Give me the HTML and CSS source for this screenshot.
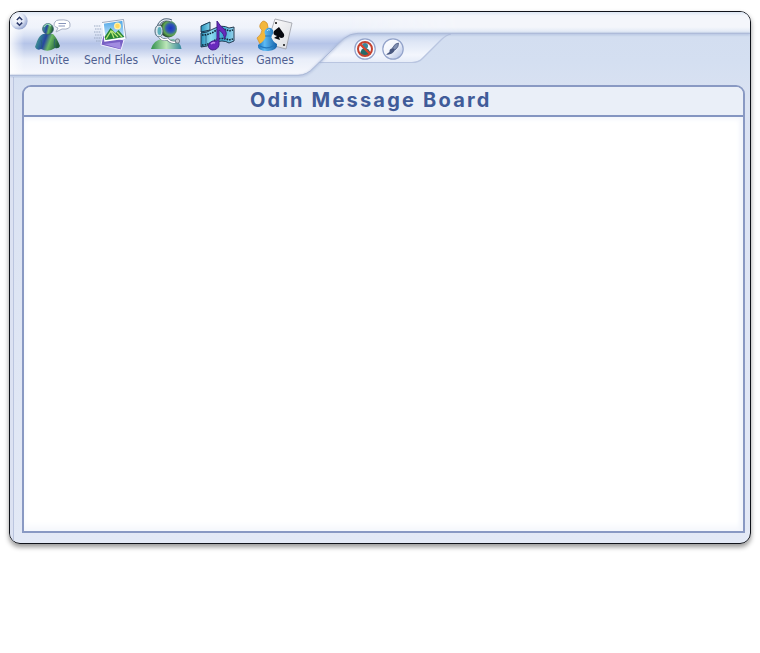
FILE: index.html
```html
<!DOCTYPE html>
<html lang="en">
<head>
<meta charset="utf-8">
<title>Odin Message Board</title>
<link rel="stylesheet" href="styles.css">
</head>
<body>
<main class="window">
  <header class="header">
    <svg class="chrome" viewBox="10 12 740 66" aria-hidden="true">
      <defs>
        <linearGradient id="bar" gradientUnits="userSpaceOnUse" x1="0" y1="12" x2="0" y2="75">
          <stop offset="0" stop-color="#dfe8f5"/><stop offset=".08" stop-color="#f4f6fc"/>
          <stop offset=".25" stop-color="#eff3fb"/><stop offset=".37" stop-color="#d8e1f4"/>
          <stop offset=".5" stop-color="#b5c4e8"/><stop offset=".58" stop-color="#c1ceeb"/>
          <stop offset=".75" stop-color="#e9eef9"/><stop offset="1" stop-color="#f7f8fd"/>
        </linearGradient>
        <linearGradient id="strip" x1="0" y1="0" x2="0" y2="1">
          <stop offset="0" stop-color="#dde7f4"/><stop offset=".18" stop-color="#f4f6fb"/>
          <stop offset=".72" stop-color="#f4f6fb"/><stop offset="1" stop-color="#dde6f4"/>
        </linearGradient>
        <linearGradient id="fade" gradientUnits="userSpaceOnUse" x1="345" y1="0" x2="460" y2="0">
          <stop offset="0" stop-color="#000"/><stop offset="1" stop-color="#fff"/>
        </linearGradient>
        <mask id="reveal" maskUnits="userSpaceOnUse" x="340" y="12" width="410" height="30"><rect x="340" y="12" width="410" height="30" fill="url(#fade)"/></mask>
        <linearGradient id="tab" x1="0" y1="0" x2="0" y2="1">
          <stop offset="0" stop-color="#cbd7ee"/><stop offset=".3" stop-color="#dfe7f6"/>
          <stop offset=".75" stop-color="#f3f6fd"/><stop offset="1" stop-color="#e6ecf8"/>
        </linearGradient>
        <linearGradient id="edge" x1="0" y1="0" x2="1" y2="0">
          <stop offset="0" stop-color="#fff" stop-opacity=".85"/><stop offset="1" stop-color="#fff" stop-opacity="0"/>
        </linearGradient>
        <filter id="soft"><feGaussianBlur stdDeviation=".8"/></filter>
      </defs>
      <path d="M322 62H412Q418 62 422 58L440 40Q445 34 450 34H340Z" fill="url(#tab)"/>
      <path d="M318 62.500H412Q419 62.500 423 58L441 40Q446 35 451 34" fill="none" stroke="#b9c5e0" stroke-width="1.2"/>
      <path d="M10 12H750V33H358Q350 33 344 38L314 67Q307 75 298 75H10Z" fill="url(#bar)"/>
      <path d="M340 12H750V33H340Z" fill="url(#strip)" mask="url(#reveal)"/>
      <rect x="10" y="12" width="14" height="63" fill="url(#edge)"/>
      <path d="M750 34H358Q350 34 344 39L314 68Q307 76 298 76H10" fill="none" stroke="#8498c5" stroke-width="2" opacity=".4" filter="url(#soft)"/>
      <path d="M750 33.300H358Q350 33.500 344 38.500L314 67.500Q307 75.300 298 75.300H10" fill="none" stroke="#a9b7d6" stroke-width="1"/>
    </svg>
    <button class="round toggle" aria-label="Toggle toolbar">
      <svg viewBox="0 0 18 18"><defs><radialGradient id="knob" cx=".35" cy=".35" r=".7"><stop stop-color="#fff"/><stop offset=".6" stop-color="#dfe6f5"/><stop offset="1" stop-color="#8fa0cc"/></radialGradient></defs>
        <circle cx="9" cy="9" r="8.600" fill="url(#knob)"/><path d="M6.800 8 9.500 5.300l2.700 2.700M6.800 10.600 9.500 13.300l2.700-2.700" fill="none" stroke="#2a3869" stroke-width="1.500"/></svg>
    </button>
    <nav class="tools">
      <a class="tool invite">
        <svg viewBox="30 14 50 40">
          <defs><linearGradient id="person" x1="0" y1="0" x2="1" y2=".25"><stop stop-color="#74a99b"/><stop offset=".25" stop-color="#347e94"/><stop offset=".46" stop-color="#2745a1"/><stop offset=".67" stop-color="#6bb862"/><stop offset="1" stop-color="#205b3c"/></linearGradient></defs>
          <path d="M44 33C39 35 38 41 36 46Q38 50 42 48Q49 52 56 47Q60 48 61 45C59 40 57 36 54 33Z" fill="url(#person)"/>
          <path d="M42 39Q44 43 42 48M56 38Q54 44 57 47" fill="none" stroke="#275e79" stroke-width=".8"/>
          <circle cx="49" cy="28" r="5.400" fill="url(#person)" stroke="#365b70" stroke-width=".8"/>
          <path d="M45 26Q48 21 52 25" fill="none" stroke="#9be1b5" stroke-width="1.200"/>
          <path d="M60 19Q71 18 71 23Q72 29 63 28L57 31L59 27Q53 25 56 21Q57 19 60 19Z" fill="#fff" stroke="#a6afc4" stroke-width="1"/>
          <path d="M59.500 22.500H67M59.500 25H66" stroke="#8895ba" stroke-width="1"/>
        </svg><span>Invite</span></a>
      <a class="tool files">
        <svg viewBox="86 14 50 40">
          <defs><linearGradient id="sky" x1="0" y1="0" x2="0" y2="1"><stop stop-color="#4aa4e6"/><stop offset="1" stop-color="#e0f3ff"/></linearGradient></defs>
          <path d="M94 25h7M95 28h7M94 31h7M95 34h7M94 37h8M96 40h6" stroke="#9caac4" stroke-width="1.100" stroke-dasharray="1.500 .8"/>
          <path d="m103 34 21 5-3 10-20-5Z" fill="#775fc4" stroke="#f2f1ff" stroke-width="1"/>
          <path d="m104 43 16-2 1 7Z" fill="#a18be0"/>
          <path d="m103 22 20-3 2 18-20 3Z" fill="url(#sky)" stroke="#fff" stroke-width="1.500"/>
          <circle cx="117.500" cy="25" r="3.500" fill="#fff3a6"/><circle cx="117.500" cy="25" r="2.300" fill="#ffd961"/>
          <path d="m104.500 36 6-9 5 5 3-3 6 7-19 3Z" fill="#278536"/>
          <path d="m106 38 5-8 3 7m-2-7 6 6M117 31l5 5" fill="none" stroke="#b9e577" stroke-width="1.300"/>
          <path d="M102 21.500 123.500 18.500l2.500 19" fill="none" stroke="#72829e" stroke-width=".7"/>
        </svg><span>Send Files</span></a>
      <a class="tool voice">
        <svg viewBox="142.500 14 50 40">
          <defs><radialGradient id="face" cx=".62" cy=".45" r=".6"><stop stop-color="#1b30c8"/><stop offset=".4" stop-color="#3159b2"/><stop offset=".7" stop-color="#60a84e"/><stop offset="1" stop-color="#17342c"/></radialGradient><linearGradient id="body"><stop stop-color="#2f8f4b"/><stop offset=".5" stop-color="#bce6b8"/><stop offset="1" stop-color="#3787a0"/></linearGradient></defs>
          <path d="M151.500 48Q154 39 163 38L174 38Q181 41 182 48Z" fill="url(#body)"/>
          <circle cx="169" cy="28" r="8.500" fill="url(#face)"/>
          <path d="M158 29C159 20 165 17 172 20" fill="none" stroke="#51657a" stroke-width="3"/><path d="M158 29C159 20 165 17 172 20" fill="none" stroke="#e8f0f6" stroke-width="1.300"/>
          <ellipse cx="159.500" cy="30" rx="4" ry="6" fill="#d9e6ec" stroke="#4d6576"/>
          <ellipse cx="160" cy="30" rx="2" ry="4" fill="#5cafbc"/>
          <path d="M160 36Q163 40 168 38Q171 42 176 41" fill="none" stroke="#5e7080" stroke-width="2.600"/><path d="M160 36Q163 40 168 38Q171 42 176 41" fill="none" stroke="#fff" stroke-width="1.400"/>
          <circle cx="178" cy="40" r="2.200" fill="#bbc5ce" stroke="#596370" stroke-width=".7"/>
        </svg><span>Voice</span></a>
      <a class="tool activities">
        <svg viewBox="196 14 50 40">
          <defs><linearGradient id="film"><stop stop-color="#2591ba"/><stop offset=".3" stop-color="#8fdcf2"/><stop offset=".65" stop-color="#3ca7d0"/><stop offset="1" stop-color="#95d2ed"/></linearGradient></defs>
          <path d="M203 25Q207 22 212 21V34L216 31Q222 29 231 33L236 31V40L231 42Q224 38 216 42L203 46Z" fill="url(#film)"/>
          <path d="M203 25 212 21V29L203 31ZM203 32V46Q209 46 215 42Q225 38 231 42L236 40V26L231 27Q224 23 215 28Q209 32 203 32Z" fill="url(#film)" stroke="#172b42" stroke-width=".9"/>
          <path d="M204 34Q211 34 217 30Q224 26 231 30l4-1M204 44Q211 44 217 39Q224 36 231 39l4-1" fill="none" stroke="#102739" stroke-width="1.600" stroke-dasharray="1.600 1"/>
          <path d="M208 34v10M227 28v10" stroke="#164569" stroke-width=".6"/>
          <path d="M219 20Q222 25 227 29Q230 33 226 38Q227 33 221 29V44Q220 49 214 49Q209 47 211 43Q213 39 219 40Z" fill="#6829bd" stroke="#43208a"/>
          <path d="M213 43q2-2 4-1" stroke="#c18aef" stroke-width="1.600" fill="none"/>
        </svg><span>Activities</span></a>
      <a class="tool games">
        <svg viewBox="250 14 50 40">
          <defs><linearGradient id="blue"><stop stop-color="#1671bd"/><stop offset=".35" stop-color="#5cbaf4"/><stop offset="1" stop-color="#125fa7"/></linearGradient><linearGradient id="card" x2="1" y2="1"><stop stop-color="#fff"/><stop offset="1" stop-color="#d9dbe0"/></linearGradient></defs>
          <path d="M264 20Q268 21 268 26Q269 31 266 33L267 40L260 43L257 37Q262 33 262 29Q258 26 261 22Q262 20 264 20Z" fill="#f3b73b" stroke="#ce8d26" stroke-width=".7"/>
          <path d="m275 18 17 4-6 26-19-5Z" fill="url(#card)" stroke="#9a9da5" stroke-width=".8"/>
          <path d="m279 26 5 7q1 4-3 4l-2-1 1 3-6-2 3-2q-5-1-3-5Z" fill="#07090f"/>
          <path d="m275 21 2 2m0-2-2 2m8 20 2 2m0-2-2 2" stroke="#444"/>
          <path d="M266 28Q270 25 273 29Q274 33 271 35Q272 40 277 43Q278 49 268 50Q257 50 258 44Q264 41 266 35Q263 31 266 28Z" fill="url(#blue)"/>
          <path d="M265 35h7M260 45Q267 49 275 44" stroke="#2277bd" stroke-width="1.200" fill="none"/>
          <path d="M267 30q1-2 3-1" stroke="#b5e7ff" fill="none"/>
        </svg><span>Games</span></a>
    </nav>
    <div class="quick">
      <button class="round" aria-label="Block">
        <svg viewBox="0 0 22 22"><circle cx="11" cy="11" r="10.200" fill="#f7f9ff" stroke="#93a3ca" stroke-width="1.200"/><circle cx="11" cy="8" r="3" fill="#39869a"/><path d="M6 16q1-6 5-6t6 6q-5 3-11 0Z" fill="#246b69"/><circle cx="11" cy="11" r="7" fill="none" stroke="#c4432f" stroke-width="2"/><path d="m6 6 10 10" stroke="#d9442d" stroke-width="2.300"/></svg>
      </button>
      <button class="round" aria-label="Draw">
        <svg viewBox="0 0 22 22"><defs><linearGradient id="disc" x2="1" y2="1"><stop stop-color="#fff"/><stop offset=".5" stop-color="#f1f4fc"/><stop offset="1" stop-color="#a7b8e0"/></linearGradient></defs><circle cx="11" cy="11" r="10.200" fill="url(#disc)" stroke="#93a3ca" stroke-width="1.200"/><path d="M16.500 5Q13 5 10.500 10L13 12Q17 9 16.500 5Z" fill="#8291b3" stroke="#44527b" stroke-width=".7"/><path d="M10.500 10Q7 11 7.500 14L4 16.500Q10 17.500 13 12Z" fill="#48577f"/></svg>
      </button>
    </div>
  </header>
  <section class="board">
    <h1 class="title">Odin Message Board</h1>
    <div class="messages"></div>
  </section>
</main>
</body>
</html>
```

FILE: styles.css
```css
* { box-sizing: border-box; }
body { margin: 0; padding: 11px 9px; background: #fff; font-family: "DejaVu Sans", sans-serif; }
.window {
  position: relative; display: flex; flex-direction: column;
  width: 742px; height: 533px; padding: 0 5px 10px 12px;
  border: 1px solid #10131a; border-radius: 11px; overflow: hidden;
  background: linear-gradient(#d2ddf0 0, #d4dff1 50px, #dae2f2 90px, #e3e9f6 100%);
  box-shadow: 0 3px 5px rgba(0, 0, 0, .42);
}
.window::before {
  content: ""; position: absolute; left: 0; top: 65px; bottom: 0; width: 3px;
  background: #dce2f2; border-right: 1px solid #bbc5df;
}
.header { display: flex; height: 73px; flex: none; margin: 0 -5px 0 -12px; position: relative; }
.chrome { position: absolute; left: 0; top: 0; width: 740px; height: 66px; }
.round { position: relative; padding: 0; border: 0; background: none; width: 22px; height: 22px; flex: none; }
.round svg { display: block; width: 100%; height: 100%; }
.toggle { width: 18px; height: 18px; margin: 0; }
.tools { position: relative; display: flex; gap: 14px; margin-left: 10px; padding-top: 3px; }
.tool { display: flex; flex-direction: column; align-items: center; height: 56px; }
.tool svg { width: 50px; height: 40px; flex: none; }
.tool span {
  margin-top: -3px; color: #4f5f91; font: 12px/16px "DejaVu Sans Condensed", "DejaVu Sans", sans-serif;
  font-stretch: condensed; letter-spacing: -.02px; white-space: nowrap;
}
.invite { width: 32px; }
.files { width: 54px; }
.voice { width: 29px; }
.activities { width: 48px; }
.games { width: 36px; }
.quick { position: relative; display: flex; gap: 6px; margin: 26px 0 0 61px; }
.board {
  flex: 1; display: flex; flex-direction: column; overflow: hidden;
  border: 2px solid #8999c3; border-radius: 9px 9px 0 0; background: #fff;
}
.title {
  flex: none; height: 30px; margin: 0; padding-left: 226px; border-bottom: 2px solid #8495c1;
  background: #eaeff8; color: #405b99; font: 700 20px/27px Inter, sans-serif; letter-spacing: 2.2px; white-space: nowrap;
}
.messages { flex: 1; box-shadow: inset -3px 2px 5px #f1f4fb, inset 0 -5px 6px #f6f8fd; }
```
